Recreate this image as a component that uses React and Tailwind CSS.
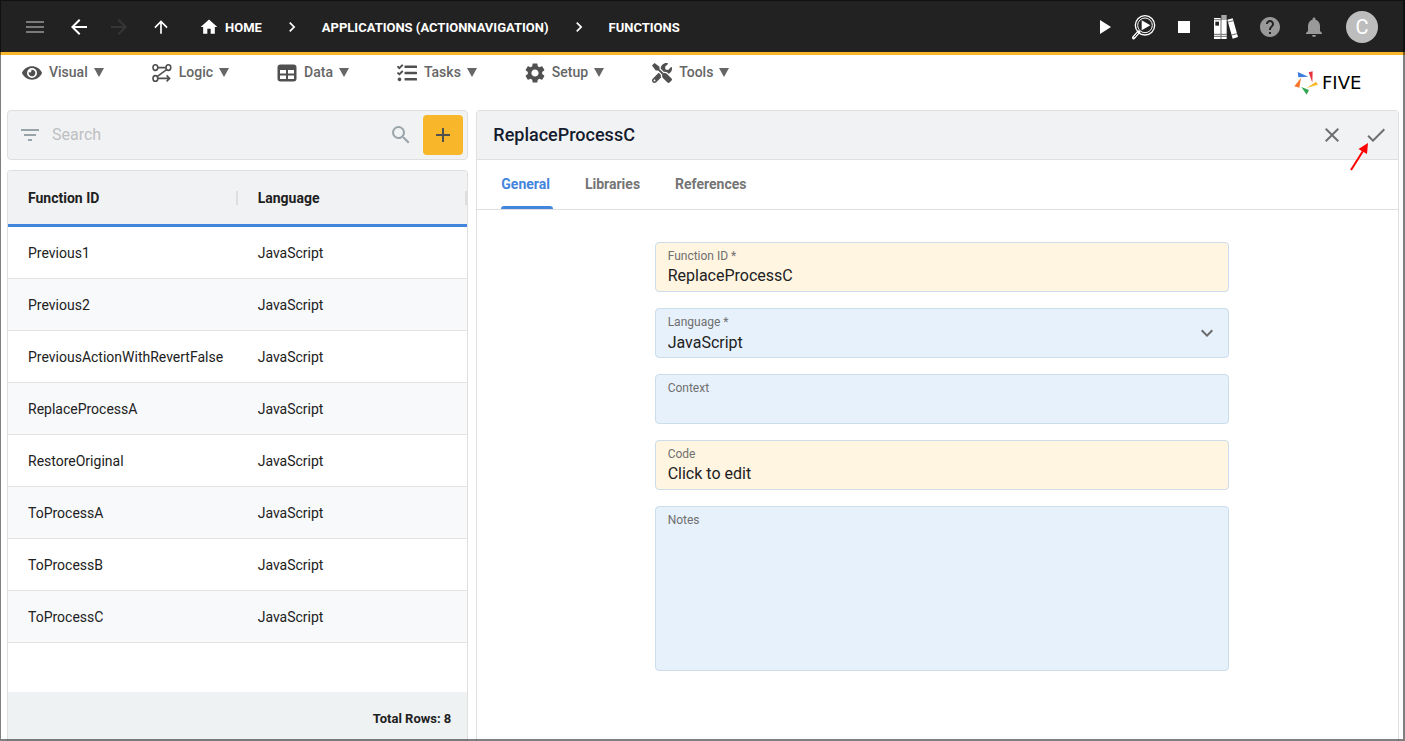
import React, { useState } from "react";
import {
  MdAdd,
  MdArrowBack,
  MdArrowForward,
  MdArrowUpward,
  MdCheck,
  MdChevronRight,
  MdClose,
  MdExpandMore,
  MdFilterList,
  MdHelp,
  MdHome,
  MdMenu,
  MdNotifications,
  MdPlayArrow,
  MdSearch,
  MdSettings,
  MdStop,
} from "react-icons/md";
import { FaEye, FaTasks, FaTools } from "react-icons/fa";

const LogicIcon = () => (
  <svg width="20" height="20" viewBox="0 0 20 20" fill="none" stroke="currentColor" strokeWidth="1.6">
    <ellipse cx="3.4" cy="4.6" rx="2.4" ry="2.8" />
    <ellipse cx="16.4" cy="4.6" rx="2.4" ry="2.8" />
    <ellipse cx="3.4" cy="15.4" rx="2.4" ry="2.8" />
    <path d="M5.8 4.6h8.2M14.6 6.600L5.4 13.400M5.8 15.400h11.600M14.600 12.400l3 3-3 3" />
  </svg>
);

const DataIcon = () => (
  <svg width="20" height="20" viewBox="0 0 20 20">
    <rect x="0.500" y="1.500" width="19" height="17" rx="3" fill="currentColor" />
    <path d="M3 7h6v3.500H3zM11 7h6v3.500h-6zM3 12.500h6V16H3zM11 12.500h6V16h-6z" fill="white" />
  </svg>
);

const InspectIcon = () => (
  <svg width="24" height="26" viewBox="0 0 72 76" fill="none">
    <path d="M20 53L5 70" stroke="white" strokeWidth="10" strokeLinecap="round" />
    <path d="M19 54L6 69" stroke="#222222" strokeWidth="3" />
    <circle cx="39" cy="33" r="29" stroke="white" strokeWidth="4" />
    <circle cx="39" cy="33" r="22" stroke="white" strokeWidth="3" />
    <path d="M29 18l26 15-26 15z" fill="white" />
  </svg>
);

const BooksIcon = () => (
  <svg width="24" height="24" viewBox="0 0 72 72" fill="white">
    <path d="M0 9h20v63H0zM22 15h16v57H22zM40 14l16-4 16 56-16 5z" />
    <path d="M22 0h16v15H22z" fill="#a6a6a6" />
    <path d="M4 20h11v12H4z" fill="#222222" />
    <path d="M0 14h20M0 58h20M0 64h20M22 58h16M22 64h16M42 21l16-4M53 60l16-4" stroke="#222222" strokeWidth="2" />
  </svg>
);

const FiveMark = () => (
  <svg width="24" height="24" viewBox="0 0 72 72">
    <path d="M11 3l32 14-30 2z" fill="#3b7ddd" />
    <path d="M44 4l12-3-1 34z" fill="#e5343d" />
    <path d="M38 51l28-19 6 9z" fill="#fbb829" />
    <path d="M22 48l23 9-7 14z" fill="#35a853" />
    <path d="M21 20L1 46l15 4z" fill="#f9772b" />
  </svg>
);

const menus = [
  { label: "Visual", icon: <FaEye size={20} /> },
  { label: "Logic", icon: <LogicIcon /> },
  { label: "Data", icon: <DataIcon /> },
  { label: "Tasks", icon: <FaTasks size={20} /> },
  { label: "Setup", icon: <MdSettings size={24} className="-m-0.5" /> },
  { label: "Tools", icon: <FaTools size={20} /> },
];

const functions = [
  "Previous1",
  "Previous2",
  "PreviousActionWithRevertFalse",
  "ReplaceProcessA",
  "RestoreOriginal",
  "ToProcessA",
  "ToProcessB",
  "ToProcessC",
];

const tabs = ["General", "Libraries", "References"];

const TopBar = () => (
  <header className="flex h-[55px] items-center justify-between border-b-3 border-[#f9b62b] bg-[#222222] pt-0.5 pr-[27px] pl-[23px] text-white">
    <div className="flex items-center">
      <button aria-label="Menu" className="text-[#7a7a7a]"><MdMenu size={24} /></button>
      <button aria-label="Back" className="ml-5"><MdArrowBack size={24} /></button>
      <button aria-label="Forward" disabled className="ml-4 text-[#363636]"><MdArrowForward size={24} /></button>
      <button aria-label="Up" className="ml-5"><MdArrowUpward size={20} /></button>
      <nav aria-label="Breadcrumb" className="ml-7 flex items-center gap-5 text-[13px] leading-5 font-bold">
        <a href="#home" className="flex items-center gap-1.5">
          <MdHome size={20} />
          <span className="pt-0.5">HOME</span>
        </a>
        <MdChevronRight size={20} />
        <a href="#applications" className="pt-0.5">APPLICATIONS (ACTIONNAVIGATION)</a>
        <MdChevronRight size={20} />
        <a href="#functions" className="pt-0.5">FUNCTIONS</a>
      </nav>
    </div>
    <div className="flex items-center gap-5">
      <div className="flex items-center gap-4">
        <button aria-label="Run"><MdPlayArrow size={24} /></button>
        <button aria-label="Inspect"><InspectIcon /></button>
        <button aria-label="Stop"><MdStop size={24} /></button>
        <button aria-label="Documentation" className="ml-0.5"><BooksIcon /></button>
      </div>
      <button aria-label="Help" className="text-[#999999]"><MdHelp size={24} /></button>
      <button aria-label="Notifications" className="text-[#999999]"><MdNotifications size={24} /></button>
      <button aria-label="Account" className="h-8 w-8 rounded-full bg-[#bdbdbd] text-xl leading-8">C</button>
    </div>
  </header>
);

const MenuBar = () => (
  <div className="flex h-[55px] items-start justify-between pr-[23px] pl-[22px]">
    <nav className="flex gap-12 pt-[7px]">
      {menus.map(({ label, icon }) => (
        <button key={label} className="flex items-center gap-[7px] text-sm leading-5 font-medium text-[#666666]">
          <span className="text-[#505050]">{icon}</span>
          <span className="flex items-center gap-1.5 pb-0.5">
            {label}
            <svg width="10" height="9" viewBox="0 0 10 9" fill="currentColor"><path d="M0 0h10L5 9z" /></svg>
          </span>
        </button>
      ))}
    </nav>
    <a href="#five" className="flex items-center gap-1 pt-4 text-black">
      <FiveMark />
      <span className="w-[60px] font-['DejaVu_Sans',sans-serif] text-lg leading-6">FIVE</span>
    </a>
  </div>
);

const FunctionList = () => (
  <section className="flex flex-col gap-2.5">
    <div className="flex h-[50px] items-center rounded border border-[#dfdfdf] bg-[#f1f2f4] pr-1 pl-2.5 text-[#99a4aa]">
      <MdFilterList size={24} />
      <input
        type="search"
        aria-label="Search"
        placeholder="Search"
        className="ml-2.5 min-w-0 flex-1 text-base outline-none placeholder:text-[#bdbfc1]"
      />
      <MdSearch size={24} />
      <button aria-label="Add function" className="ml-2.5 flex h-10 w-10 items-center justify-center rounded bg-[#f8b72a] text-[#505050]">
        <MdAdd size={24} />
      </button>
    </div>

    <div className="flex flex-1 flex-col overflow-hidden rounded-t border-x border-t border-[#dfdfdf]">
      <table className="w-full table-fixed border-separate border-spacing-0 text-left text-sm text-[#212121]">
        <thead>
          <tr className="bg-[#f1f2f4]">
            {["Function ID", "Language"].map((name) => (
              <th key={name} className="h-14 border-b-3 border-[#4285dc] pl-5 font-bold">
                <div className="flex items-center justify-between">
                  {name}
                  <span className="h-3.5 w-0.5 bg-[#dcdee0]" />
                </div>
              </th>
            ))}
          </tr>
        </thead>
        <tbody>
          {functions.map((id) => (
            <tr key={id} className="even:bg-[#f8f9fb]">
              <td className="h-[52px] border-b border-[#e2e3e5] pl-5 whitespace-nowrap">{id}</td>
              <td className="h-[52px] border-b border-[#e2e3e5] pl-5">JavaScript</td>
            </tr>
          ))}
        </tbody>
      </table>
      <div className="mt-auto h-[49px] bg-[#eef2f3] pt-[17px] pr-4 text-right text-[13px] leading-5 font-bold text-[#212121]">
        Total Rows: 8
      </div>
    </div>
  </section>
);

const Field = ({ id, label, tint, children }) => (
  <div className={`relative flex flex-col rounded border border-[#cbdcea] px-3 pt-1 ${tint}`}>
    <label htmlFor={id} className="text-xs leading-[18px] text-[#6f6f6f]">{label}</label>
    {children}
  </div>
);

const FunctionForm = () => {
  const [form, setForm] = useState({ id: "ReplaceProcessC", language: "JavaScript", context: "", notes: "" });

  const handleChange = (e) => setForm({ ...form, [e.target.name]: e.target.value });

  return (
    <form className="flex justify-center pt-8 pl-2">
      <div className="flex w-full max-w-[574px] flex-col gap-4 text-base text-[#212121]">
        <Field id="function-id" label="Function ID *" tint="h-[50px] bg-[#fff5e1]">
          <input id="function-id" name="id" value={form.id} onChange={handleChange} className="h-[22px] outline-none" />
        </Field>

        <Field id="language" label="Language *" tint="h-[50px] bg-[#e7f1fc]">
          <select id="language" name="language" value={form.language} onChange={handleChange} className="h-6 appearance-none outline-none">
            <option>JavaScript</option>
            <option>TypeScript</option>
          </select>
          <MdExpandMore size={24} className="pointer-events-none absolute top-3 right-[9px] text-[#6b6b6b]" />
        </Field>

        <Field id="context" label="Context" tint="h-[50px] bg-[#e7f1fc]">
          <input id="context" name="context" value={form.context} onChange={handleChange} className="h-[22px] outline-none" />
        </Field>

        <Field id="code" label="Code" tint="h-[50px] bg-[#fff5e1]">
          <input id="code" name="code" value="Click to edit" readOnly className="h-[22px] cursor-pointer outline-none" />
        </Field>

        <Field id="notes" label="Notes" tint="h-[165px] bg-[#e7f1fc]">
          <textarea id="notes" name="notes" value={form.notes} onChange={handleChange} className="flex-1 resize-none outline-none" />
        </Field>
      </div>
    </form>
  );
};

const FunctionDetail = () => {
  const [tab, setTab] = useState("General");

  return (
    <section className="rounded-t border-x border-t border-[#dfdfdf]">
      <div className="flex h-[49px] items-center justify-between border-b border-[#dfdfdf] bg-[#f1f2f4] pr-2.5 pl-4">
        <h1 className="text-lg font-medium text-[#151c2e]">ReplaceProcessC</h1>
        <div className="relative flex gap-5 text-[#6f6f6f]">
          <button aria-label="Cancel"><MdClose size={24} /></button>
          <button aria-label="Save"><MdCheck size={24} /></button>
          {/* Pointer to the save button */}
          <svg className="pointer-events-none absolute top-5 right-4" width="24" height="30" viewBox="0 0 24 30">
            <path d="M3 27L15 8" stroke="#ff0000" strokeWidth="2" />
            <path d="M20 0L10.500 6l8.500 5z" fill="#ff0000" />
          </svg>
        </div>
      </div>

      <div role="tablist" className="flex h-[50px] gap-8 border-b border-[#dfdfdf] pl-6">
        {tabs.map((name) => (
          <button
            key={name}
            type="button"
            role="tab"
            aria-selected={tab === name}
            onClick={() => setTab(name)}
            className={`relative pr-[3px] pb-0.5 text-sm font-bold ${tab === name ? "text-[#4285dc]" : "text-[#757575]"}`}
          >
            {name}
            {tab === name && <span className="absolute inset-x-0 bottom-0 h-[3px] rounded-t-sm bg-[#4285dc]" />}
          </button>
        ))}
      </div>

      <FunctionForm />
    </section>
  );
};

export default function App() {
  return (
    <div className="relative flex min-h-screen flex-col bg-white font-[Roboto,sans-serif]">
      <TopBar />
      <MenuBar />
      <main className="grid flex-1 grid-cols-[1fr_2fr] gap-2 pr-1.5 pl-[7px]">
        <FunctionList />
        <FunctionDetail />
      </main>
      {/* Window frame */}
      <div className="pointer-events-none absolute inset-0 border border-r-2 border-b-2 border-black/50" />
    </div>
  );
}
